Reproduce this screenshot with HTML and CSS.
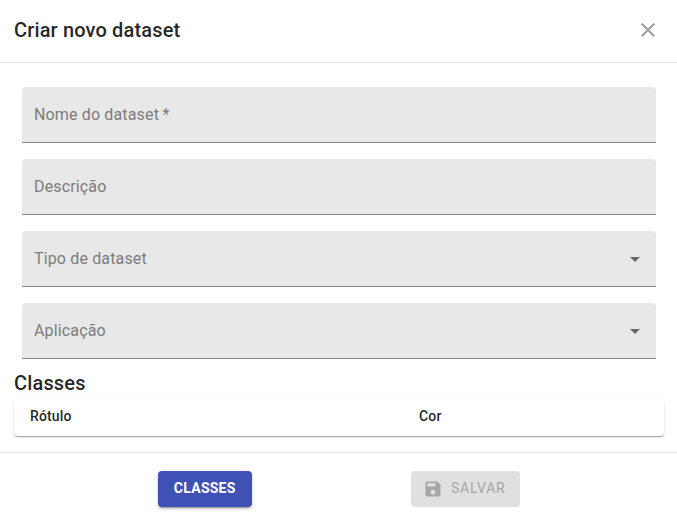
FILE: index.html
```html
<!DOCTYPE html>
<html lang="pt-BR">
<head>
<meta charset="utf-8">
<title>Criar novo dataset</title>
<link rel="stylesheet" href="styles.css">
</head>
<body>
<div class="dialog">
  <header class="header">
    <h2 class="title">Criar novo dataset</h2>
    <svg class="close" viewBox="0 0 24 24"><path d="M19 6.41L17.59 5 12 10.59 6.41 5 5 6.41 10.59 12 5 17.59 6.41 19 12 13.41 17.59 19 19 17.59 13.41 12z"/></svg>
  </header>
  <main class="content">
    <div class="fields">
      <div class="field"><span>Nome do dataset<span class="required"> *</span></span></div>
      <div class="field"><span>Descrição</span></div>
      <div class="field"><span>Tipo de dataset</span><svg class="arrow" viewBox="0 0 24 24"><path d="M7 10l5 5 5-5z"/></svg></div>
      <div class="field"><span>Aplicação</span><svg class="arrow" viewBox="0 0 24 24"><path d="M7 10l5 5 5-5z"/></svg></div>
    </div>
    <h3 class="title subtitle">Classes</h3>
    <div class="table"><span>Rótulo</span><span>Cor</span></div>
  </main>
  <footer class="footer">
    <div class="cell"><button class="button primary">CLASSES</button></div>
    <div class="cell"><button class="button disabled" disabled><svg class="save" viewBox="0 0 24 24"><path d="M17 3H5c-1.11 0-2 .9-2 2v14c0 1.1.89 2 2 2h14c1.1 0 2-.9 2-2V7l-4-4zm-5 16c-1.66 0-3-1.34-3-3s1.34-3 3-3 3 1.34 3 3-1.34 3-3 3zm3-10H5V5h10v4z"/></svg>SALVAR</button></div>
  </footer>
</div>
</body>
</html>
```
FILE: styles.css
```css
* { box-sizing: border-box; }
body { margin: 0; background: #fff; font-family: Roboto, "Liberation Sans", sans-serif; color: rgba(0,0,0,.87); }
.dialog { height: 522px; display: flex; flex-direction: column; overflow: hidden; }
.header { height: 63px; padding: 0 17px 3px 14px; display: flex; align-items: center; justify-content: space-between; border-bottom: 1px solid #e0e0e0; }
.title { margin: 0; font-size: 20px; font-weight: 500; line-height: 32px; letter-spacing: .15px; }
.close { width: 24px; height: 24px; fill: #9e9e9e; }
.content { height: 390px; padding: 24px 13px 0 14px; border-bottom: 1px solid #e0e0e0; }
.fields { padding: 0 8px; display: flex; flex-direction: column; gap: 16px; }
.field { height: 56px; padding: 0 9px 0 12px; display: flex; align-items: center; justify-content: space-between; background: #e8e8e8; border-bottom: 1px solid #868686; border-radius: 4px 4px 0 0; color: #7c7c7c; font-size: 16px; font-weight: 400; letter-spacing: .15px; }
.required { letter-spacing: -.4px; }
.arrow { width: 24px; height: 24px; fill: #666; }
.subtitle { margin-top: 8px; }
.table { height: 37px; padding: 0 16px 4px; display: grid; grid-template-columns: 389px 1fr; align-items: center; border-radius: 4px; box-shadow: 0 2px 1px -1px rgba(0,0,0,.2), 0 1px 1px rgba(0,0,0,.14), 0 1px 3px rgba(0,0,0,.12); font-size: 14px; font-weight: 500; letter-spacing: .15px; }
.footer { height: 69px; padding: 18px 81px 0 75px; display: grid; grid-template-columns: 1fr 1fr; }
.cell { display: flex; justify-content: center; }
.button { height: 36px; padding: 0 0 2px; border: 0; border-radius: 4px; display: flex; align-items: center; justify-content: center; font: 500 14px Roboto, sans-serif; letter-spacing: .4px; }
.primary { width: 94px; padding-right: 1px; background: #3f51b5; color: #fff; font-weight: 700; letter-spacing: .25px; box-shadow: 0 3px 1px -2px rgba(0,0,0,.2), 0 2px 2px rgba(0,0,0,.14), 0 1px 5px rgba(0,0,0,.12); }
.disabled { width: 109px; padding-right: 3px; background: #e0e0e0; color: #a6a6a6; font-weight: 400; letter-spacing: .75px; }
.save { width: 20px; height: 20px; margin: 2px 8px 0 0; fill: currentColor; }
```
